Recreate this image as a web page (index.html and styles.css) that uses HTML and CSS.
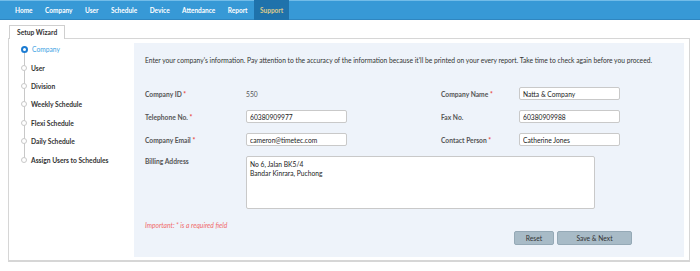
FILE: index.html
```html
<!DOCTYPE html>
<html lang="en">
<head>
    <meta charset="UTF-8">
    <title>Setup Wizard</title>
    <link rel="stylesheet" href="styles.css">
</head>
<body>

    <!-- Menu principal -->
    <nav class="top-nav">
        <a class="nav-item">Home</a>
        <a class="nav-item">Company</a>
        <a class="nav-item">User</a>
        <a class="nav-item">Schedule</a>
        <a class="nav-item">Device</a>
        <a class="nav-item">Attendance</a>
        <a class="nav-item">Report</a>
        <a class="nav-item active">Support</a>
    </nav>

    <div class="wizard">
        <div class="tabs">
            <div class="tab">Setup Wizard</div>
        </div>

        <div class="wizard-box">
            <!-- Pasos -->
            <ul class="steps">
                <li class="step current"><span class="dot"></span>Company</li>
                <li class="step"><span class="dot"></span>User</li>
                <li class="step"><span class="dot"></span>Division</li>
                <li class="step"><span class="dot"></span>Weekly Schedule</li>
                <li class="step"><span class="dot"></span>Flexi Schedule</li>
                <li class="step"><span class="dot"></span>Daily Schedule</li>
                <li class="step"><span class="dot"></span>Assign Users to Schedules</li>
            </ul>

            <!-- Formulario -->
            <div class="form-panel">
                <p class="intro">Enter your company's information. Pay attention to the accuracy of the information because it'll be printed on your every report. Take time to check again before you proceed.</p>

                <div class="form-grid">
                    <label>Company ID <span class="req">*</span></label>
                    <span class="value">550</span>
                    <label>Company Name <span class="req">*</span></label>
                    <input type="text" value="Natta &amp; Company">

                    <label>Telephone No. <span class="req">*</span></label>
                    <input type="text" value="60380909977">
                    <label>Fax No.</label>
                    <input type="text" value="60380909988">

                    <label>Company Email <span class="req">*</span></label>
                    <input type="text" value="cameron@timetec.com">
                    <label>Contact Person <span class="req">*</span></label>
                    <input type="text" value="Catherine Jones">

                    <label class="top">Billing Address</label>
                    <textarea class="address">No 6, Jalan BK5/4
Bandar Kinrara, Puchong</textarea>
                </div>

                <p class="note">Important: * is a required field</p>

                <div class="actions">
                    <button class="btn btn-reset">Reset</button>
                    <button class="btn btn-next">Save &amp; Next</button>
                </div>
            </div>
        </div>
    </div>

</body>
</html>
```

FILE: styles.css
```css
/* Estilos generales */
body {
    margin: 0;
    font-family: "Lato", "Open Sans", sans-serif;
    font-size: 6.7px;
    color: #444;
    background-color: #fff;
}

/* Menu superior */
.top-nav {
    display: flex;
    height: 18px;
    padding-left: 9px;
    background-color: #3799d6;
    border-top: 1px solid #72bce8;
    border-bottom: 1px solid #2f86c0;
}

.nav-item {
    display: flex;
    align-items: center;
    padding: 0 6px;
    margin-right: 0.5px;
    font-size: 6.5px;
    color: #fff;
    font-weight: bold;
}

.nav-item.active {
    margin-top: -1px;
    margin-bottom: -1px;
    background-color: #1f72ab;
    color: #dccb8b;
}

/* Pestañas */
.wizard {
    padding: 5px 10px 0 8px;
}

.tabs {
    display: flex;
    padding-left: 1px;
}

.tab {
    position: relative;
    box-sizing: border-box;
    height: 14px;
    line-height: 13px;
    padding: 0 7px;
    margin-bottom: -1px;
    border: 1px solid #cfcfcf;
    border-bottom: none;
    background-color: #fff;
    color: #333;
    font-weight: bold;
}

/* Caja del asistente */
.wizard-box {
    display: flex;
    box-sizing: border-box;
    height: 224px;
    border: 1px solid #d6d6d6;
    border-bottom-width: 2px;
}

/* Pasos */
.steps {
    list-style: none;
    margin: 0;
    padding: 1px 0 0 12px;
    width: 113px;
}

.step {
    position: relative;
    display: flex;
    align-items: center;
    height: 18.4px;
    color: #333;
    font-weight: bold;
}

.step::before {
    content: "";
    position: absolute;
    left: 3px;
    top: 9px;
    height: 19px;
    border-left: 1px solid #c8c8c8;
}

.step:last-child::before {
    display: none;
}

.dot {
    position: relative;
    z-index: 1;
    width: 4px;
    height: 4px;
    margin-right: 4px;
    border: 1.5px solid #c8c8c8;
    border-radius: 50%;
    background-color: #fff;
}

.step.current {
    color: #3ea2e3;
    font-weight: normal;
}

.step.current .dot {
    border: 2px solid #1c7cd2;
    width: 3px;
    height: 3px;
}

/* Panel del formulario */
.form-panel {
    flex: 1;
    margin: 4px 5px 3px 0;
    padding: 13px 11px 0;
    background-color: #eef3fa;
}

.intro {
    margin: 0 0 23px;
    color: #333;
    white-space: nowrap;
}

.form-grid {
    display: grid;
    grid-template-columns: 101px 195px 78px 101px;
    grid-template-rows: 13px 13px 13px 53px;
    row-gap: 10px;
    align-items: center;
}

.form-grid label {
    font-weight: bold;
    color: #555;
}

.form-grid label.top {
    align-self: start;
    padding-top: 1px;
}

.req {
    color: #e8453c;
}

.value {
    color: #555;
}

input,
textarea {
    box-sizing: border-box;
    margin: 0;
    padding: 0 3px;
    font-family: inherit;
    font-size: 6.7px;
    color: #222;
    background-color: #fff;
    border: 1px solid #c9c9c9;
    border-radius: 2px;
}

input {
    width: 101px;
    height: 13px;
}

.address {
    grid-column: 2 / 5;
    width: 349px;
    height: 53px;
    padding: 3px 3px;
    line-height: 9px;
    resize: none;
}

.note {
    margin: 12px 0 0;
    color: #f06a6a;
    font-style: italic;
}

/* Botones */
.actions {
    display: flex;
    justify-content: flex-end;
    gap: 3px;
    margin-top: 2px;
    padding-right: 41px;
}

.btn {
    height: 14px;
    padding: 0;
    font-family: inherit;
    font-size: 6.7px;
    color: #333;
    background-color: #a8bbc7;
    border: 1px solid #95a9b6;
    border-radius: 2px;
}

.btn-reset {
    width: 40px;
}

.btn-next {
    width: 75px;
}
```
